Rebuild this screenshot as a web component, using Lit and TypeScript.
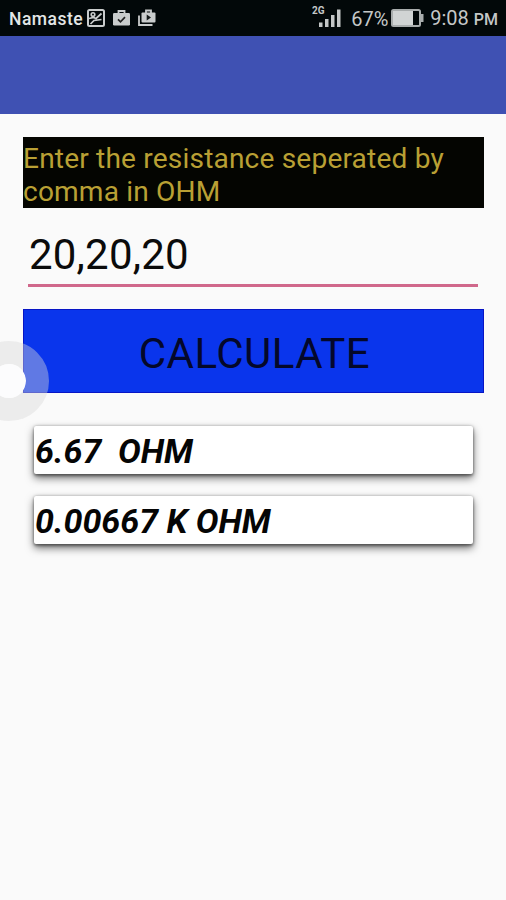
import { LitElement, html, css } from "lit";
import { customElement, property, state } from "lit/decorators.js";

@customElement("status-bar")
class StatusBar extends LitElement {
  static styles = css`
    :host { display: flex; align-items: center; justify-content: space-between; box-sizing: border-box;
      height: 36px; padding: 0 8px 0 9px; background: #020809; color: #c4c7c7; }
    .group { display: flex; align-items: center; height: 36px; }
    .carrier { font-size: 17.5px; font-weight: 500; line-height: 36px; letter-spacing: 0.5px; color: #e3e6e6; width: 78px; white-space: nowrap; padding-top: 1px; }
    .icon { display: block; flex: none; }
    .photo { margin-right: 8px; }
    .bag { margin-right: 8px; }
    .signal { margin-right: 10px; }
    .num { font-size: 20px; line-height: 36px; white-space: nowrap; padding-top: 2px; }
    .percent { width: 40px; }
    .battery { margin-right: 6px; }
    .pm { font-size: 16px; font-weight: 500; }
    .net { font: 700 10px Roboto, sans-serif; }
  `;

  render() {
    return html`
      <div class="group">
        <span class="carrier">Namaste</span>
        <svg class="icon photo" width="18" height="18" viewBox="0 0 18 18" fill="none" stroke="#c9cccc" stroke-width="2">
          <rect x="1" y="1" width="16" height="16" rx="1.5" />
          <circle cx="6" cy="5.5" r="1.8" stroke-width="1.6" />
          <path d="M2 9.500L6.500 8.500L9 9.500L14.500 4.500M3.500 15L7 11.500L14.500 10.500" stroke-width="1.7" />
        </svg>
        <svg class="icon bag" width="17" height="18" viewBox="0 0 17 18">
          <path d="M5.5 5V2H11.5V5" fill="none" stroke="#c9cccc" stroke-width="1.8" />
          <rect y="4" width="17" height="12.5" rx="1.3" fill="#c9cccc" />
          <path d="M5 10.3L7.5 12.8L12 8.2" fill="none" stroke="#222" stroke-width="1.7" />
        </svg>
        <svg class="icon" width="18" height="18" viewBox="0 0 18 18">
          <path d="M8 4V1.5H13V4M1 6.5V16H14.5" fill="none" stroke="#c9cccc" stroke-width="1.8" />
          <rect x="3.5" y="3.5" width="14" height="10" rx="1" fill="#c9cccc" />
          <path d="M8.7 5.5L13 8.5L8.7 11.5Z" fill="#151a1a" />
        </svg>
      </div>
      <div class="group">
        <svg class="icon signal" width="29" height="24" viewBox="0 0 29 24" fill="#c4c7c7">
          <text class="net" x="0" y="8">2G</text>
          <path d="M7 16.500h3.500v4.500h-3.500zM13 13h3.500v8h-3.500zM19 9h3.500v12h-3.500zM25 3.500h3.500v17.500h-3.500z" />
        </svg>
        <span class="num percent">67%</span>
        <svg class="icon battery" width="33" height="18" viewBox="0 0 33 18">
          <rect x="1" y="1" width="28" height="16" rx="1.5" fill="none" stroke="#a9adad" stroke-width="2" />
          <rect x="2" y="2" width="20" height="14" fill="#d1d4d4" />
          <path d="M30 5h2.500v8h-2.500z" fill="#a9adad" />
        </svg>
        <span class="num">9:08 <span class="pm">PM</span></span>
      </div>`;
  }
}

@customElement("result-card")
class ResultCard extends LitElement {
  @property() value = "";

  static styles = css`
    :host { display: block; box-sizing: border-box; height: 48px; padding-left: 1px; background: #fff; border-radius: 2px;
      box-shadow: 0 4px 8px rgba(0,0,0,.55), 0 2px 3px rgba(0,0,0,.35), 0 0 3px rgba(0,0,0,.25); }
    .value { font-size: 34px; font-weight: 700; font-style: italic; line-height: 51px; white-space: pre; color: #050505; }
  `;

  render() {
    return html`<div class="value">${this.value}</div>`;
  }
}

@customElement("app-root")
class AppRoot extends LitElement {
  @state() private values = "20,20,20";
  @state() private results = ["6.67  OHM", "0.00667 K OHM"];

  static styles = css`
    :host { display: block; position: relative; height: 900px; overflow: hidden; background: #fafafa;
      font-family: Roboto, sans-serif; }
    .toolbar { height: 78px; background: #3f51b3; }
    .content { padding: 23px 22px 0 23px; }
    .prompt { box-sizing: border-box; height: 71px; padding-top: 5px; background: #040501; color: #b9a034;
      font-size: 28.1px; line-height: 33px; letter-spacing: 0.17px; }
    .field { display: block; box-sizing: border-box; width: 450px; height: 68px; margin: 11px 0 0 5px; padding: 5px 0 0 1px;
      border: 0; border-bottom: 3px solid #d0688b; border-radius: 0; outline: 0; background: transparent;
      font: 42px Roboto, sans-serif; letter-spacing: 0.2px; color: #0b0b0b; }
    .calculate { display: block; width: 461px; height: 84px; margin: 22px 0 0; padding: 4px 0 0 2px; border: 1px solid #0715c5;
      background: #0a35ec; font: 42px Roboto, sans-serif; letter-spacing: 0.45px; color: #04082a; }
    .results { display: flex; flex-direction: column; gap: 22px; padding: 33px 11px 0; }
    .assist { position: absolute; left: -31px; top: 341px; width: 80px; height: 80px; box-sizing: border-box;
      border: 23px solid rgba(218,218,218,.42); border-radius: 50%; }
    .assist::after { content: ""; display: block; height: 34px; border-radius: 50%; background: #fcfcfd; }
  `;

  render() {
    return html`
      <status-bar></status-bar>
      <div class="toolbar"></div>
      <div class="content">
        <div class="prompt">Enter the resistance seperated by comma in OHM</div>
        <input class="field" .value=${this.values} />
        <button class="calculate">CALCULATE</button>
        <div class="results">${this.results.map((r) => html`<result-card .value=${r}></result-card>`)}</div>
      </div>
      <div class="assist"></div>`;
  }
}
